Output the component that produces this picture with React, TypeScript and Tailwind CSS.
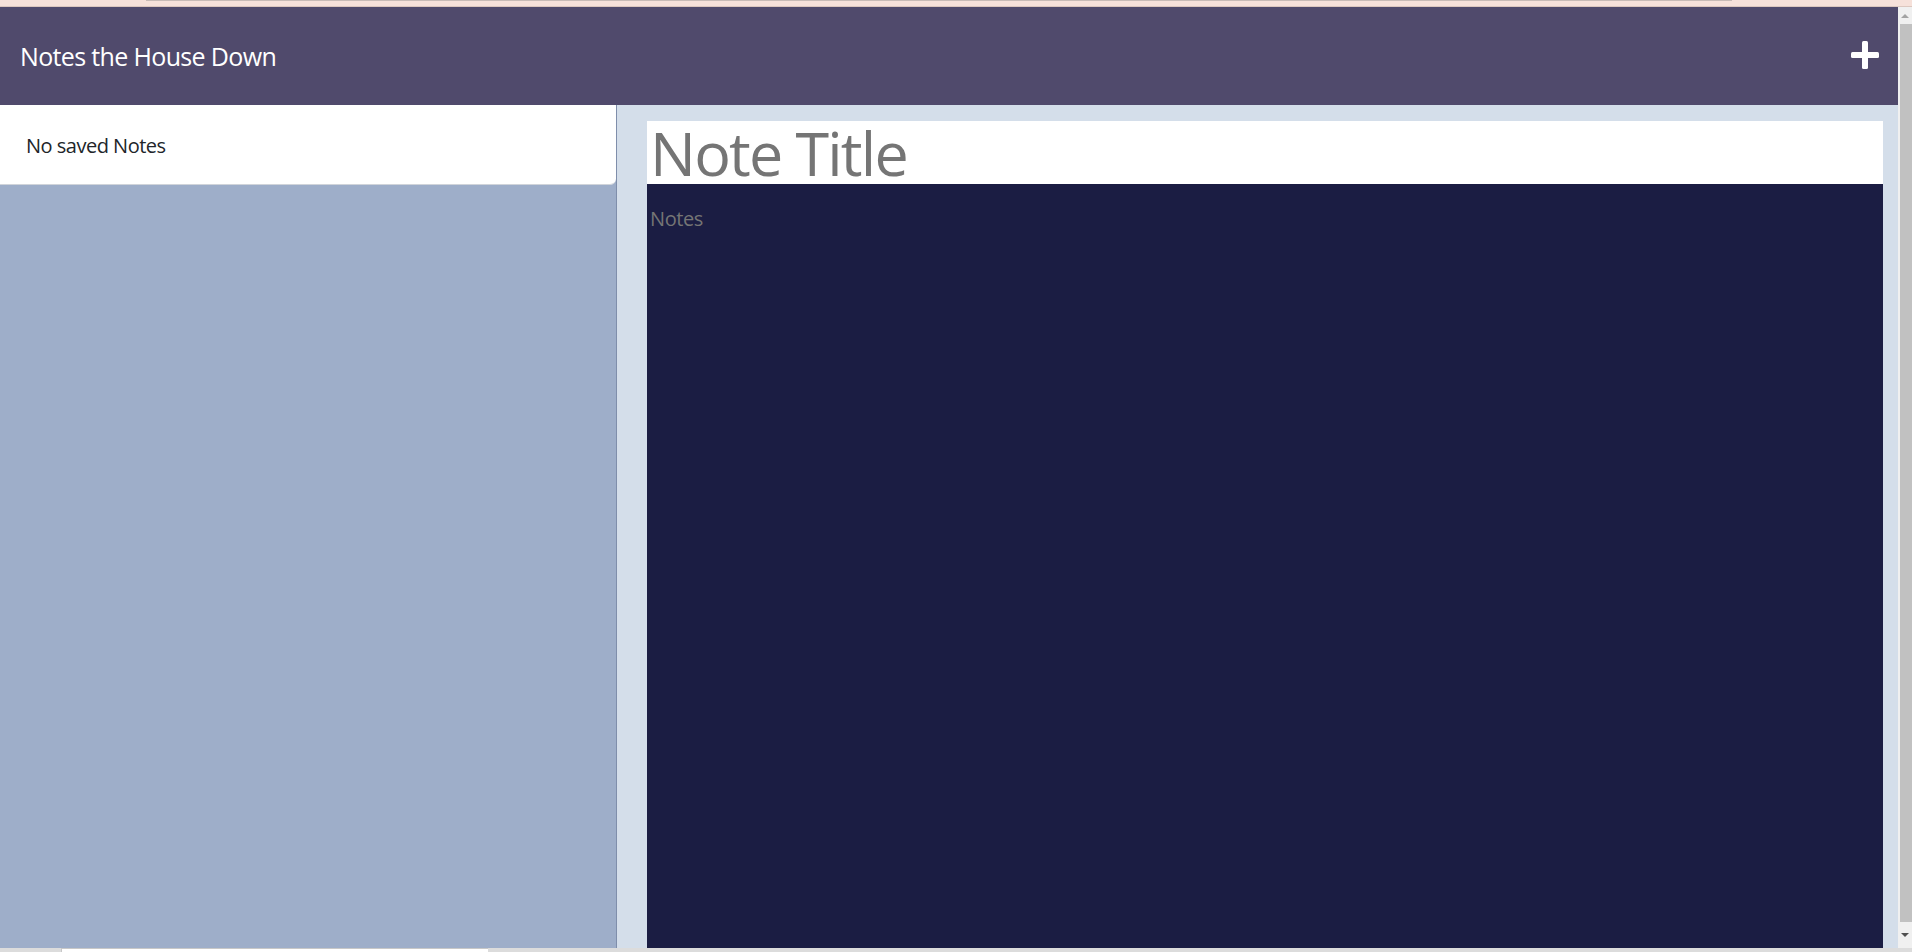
import React from "react";

export default function App() {
  return (
    <div className="w-[1912px] h-[952px] flex flex-col overflow-hidden font-['Segoe_UI','Open_Sans',sans-serif]">
      {/* browser chrome strip */}
      <div className="relative h-[7px] shrink-0 bg-[#f6e1da] border-b border-[#dcc7bf]">
        <div className="absolute left-[146px] top-0 h-[1px] w-[1586px] bg-[#c8bbb6]" />
      </div>

      <div className="flex flex-1 min-h-0">
        <div className="flex flex-1 flex-col min-w-0">
          {/* navbar */}
          <header className="h-[98px] shrink-0 bg-[#504a6c] flex items-center justify-between pl-[20px] pr-[19px]">
            <span className="text-white text-[25px] leading-none tracking-[-0.65px]">Notes the House Down</span>
            <button className="text-white -mt-[3px]" aria-label="New note">
              <svg width="28" height="28" viewBox="0 0 28 28">
                <rect x="11" y="0" width="6" height="28" rx="1.5" fill="white" />
                <rect x="0" y="11" width="28" height="6" rx="1.5" fill="white" />
              </svg>
            </button>
          </header>

          <div className="flex flex-1 min-h-0">
            {/* note list */}
            <aside className="w-[617px] shrink-0 bg-[#9eaec9] border-r border-[#7f8eab]">
              <div className="h-[80px] bg-white rounded-br-[6px] border-b border-[#d0d4da] flex items-center pt-[2px] px-[26px] text-[20px] text-[#212529] tracking-[-0.5px]">
                No saved Notes
              </div>
            </aside>

            {/* editor */}
            <main className="flex-1 flex flex-col bg-[#d4deea] pt-[16px] pl-[30px] pr-[15px]">
              <input
                className="h-[63px] shrink-0 bg-white text-[61px] leading-none tracking-[-1.8px] text-[#212529] placeholder:text-[#757575] px-[3px] outline-none"
                placeholder="Note Title"
              />
              <textarea
                className="flex-1 resize-none bg-[#1b1d43] text-[20px] leading-[30px] tracking-[-0.4px] text-white placeholder:text-[#757575] pt-[20px] px-[3px] outline-none"
                placeholder="Notes"
              />
            </main>
          </div>
        </div>

        {/* scrollbar */}
        <div className="w-[14px] shrink-0 bg-[#f0f0f0] flex flex-col items-center">
          <div className="h-[17px] flex items-center justify-center">
            <div className="w-0 h-0 border-l-[4px] border-r-[4px] border-b-[4px] border-l-transparent border-r-transparent border-b-[#a3a3a3]" />
          </div>
          <div className="flex-1 w-[12px] ml-[2px] bg-[#c1c1c1]" />
          <div className="h-[26px] flex items-center justify-center">
            <div className="w-0 h-0 border-l-[4px] border-r-[4px] border-t-[4px] border-l-transparent border-r-transparent border-t-[#505050]" />
          </div>
        </div>
      </div>

      {/* bottom strip */}
      <div className="h-[4px] shrink-0 bg-[#dcdcdc] flex">
        <div className="ml-[61px] w-[427px] bg-white border-l border-t border-[#c8c8c8]" />
      </div>
    </div>
  );
}
